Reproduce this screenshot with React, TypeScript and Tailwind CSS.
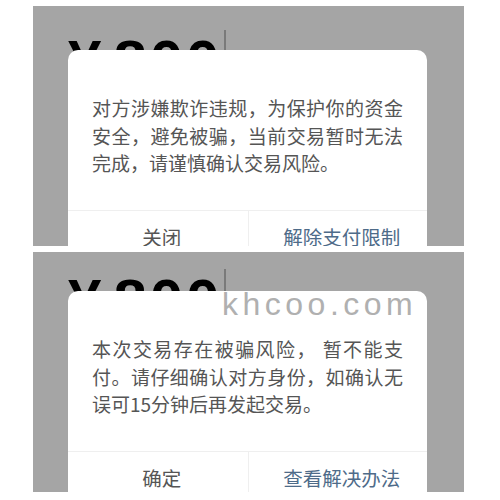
const CJK = "font-['Noto_Sans_CJK_SC','Noto_Sans',sans-serif]";

interface Notice {
  lines: string[];
  cancel: string;
  action: string;
  padTop: string;
  amountRow: string;
  watermark?: boolean;
}

const notices: Notice[] = [
  {
    lines: ['对方涉嫌欺诈违规，为保护你的资金', '安全，避免被骗，当前交易暂时无法', '完成，请谨慎确认交易风险。'],
    cancel: '关闭',
    action: '解除支付限制',
    padTop: 'pt-[26px]',
    amountRow: 'h-[18px]',
  },
  {
    lines: ['本次交易存在被骗风险， 暂不能支', '付。请仔细确认对方身份，如确认无', '误可15分钟后再发起交易。'],
    cancel: '确定',
    action: '查看解决办法',
    padTop: 'pt-[19px]',
    amountRow: 'h-[20px]',
    watermark: true,
  },
];

function AmountRow({ className }: { className: string }) {
  return (
    <div className={`flex items-start ${className}`}>
      <span className="font-['Liberation_Sans',Arial,sans-serif] text-[60px] font-bold leading-none text-black">
        ¥
      </span>
      <span className="ml-[12px] font-['Liberation_Sans',Arial,sans-serif] text-[60px] font-bold leading-none tracking-[3px] text-black">
        800
      </span>
      {/* input caret */}
      <div className="-mt-[2px] ml-[2px] h-[22px] w-[1.5px] bg-[#7a7a7a]" />
    </div>
  );
}

function NoticePanel({ notice }: { notice: Notice }) {
  return (
    <div className={`relative h-[240px] overflow-hidden bg-[#a5a5a5] pl-[35px] ${notice.padTop}`}>
      <AmountRow className={notice.amountRow} />

      <div className={`relative w-[359px] rounded-[10px] bg-white ${CJK}`}>
        <div className="px-[24px] pb-[33px] pt-[44px] text-[19px] leading-[27.5px] text-[#555]">
          {notice.lines.map((line, i) => (
            <div
              key={i}
              className={`whitespace-nowrap ${
                i < notice.lines.length - 1 ? '[text-align-last:justify] text-justify' : ''
              }`}
            >
              {line}
            </div>
          ))}
        </div>
        <div className="grid grid-cols-2 border-t border-[#efefef]">
          <div className="flex h-[52px] items-center justify-center pl-[8px] text-[19.5px] text-[#555]">
            {notice.cancel}
          </div>
          <div className="flex h-[52px] items-center justify-center border-l border-[#efefef] pl-[8px] text-[19.5px] text-[#4e6b89]">
            {notice.action}
          </div>
        </div>
      </div>

      {notice.watermark && (
        <span className="absolute left-[189px] top-[36px] font-['Liberation_Sans',Arial,sans-serif] text-[32px] leading-none tracking-[4.5px] text-[#b0b0b0]">
          khcoo.com
        </span>
      )}
    </div>
  );
}

export default function App() {
  return (
    <div className="flex h-[500px] w-[500px] flex-col gap-[6px] bg-white pl-[33px] pr-[36px] pt-[6px]">
      {notices.map((n, i) => (
        <NoticePanel key={i} notice={n} />
      ))}
    </div>
  );
}
